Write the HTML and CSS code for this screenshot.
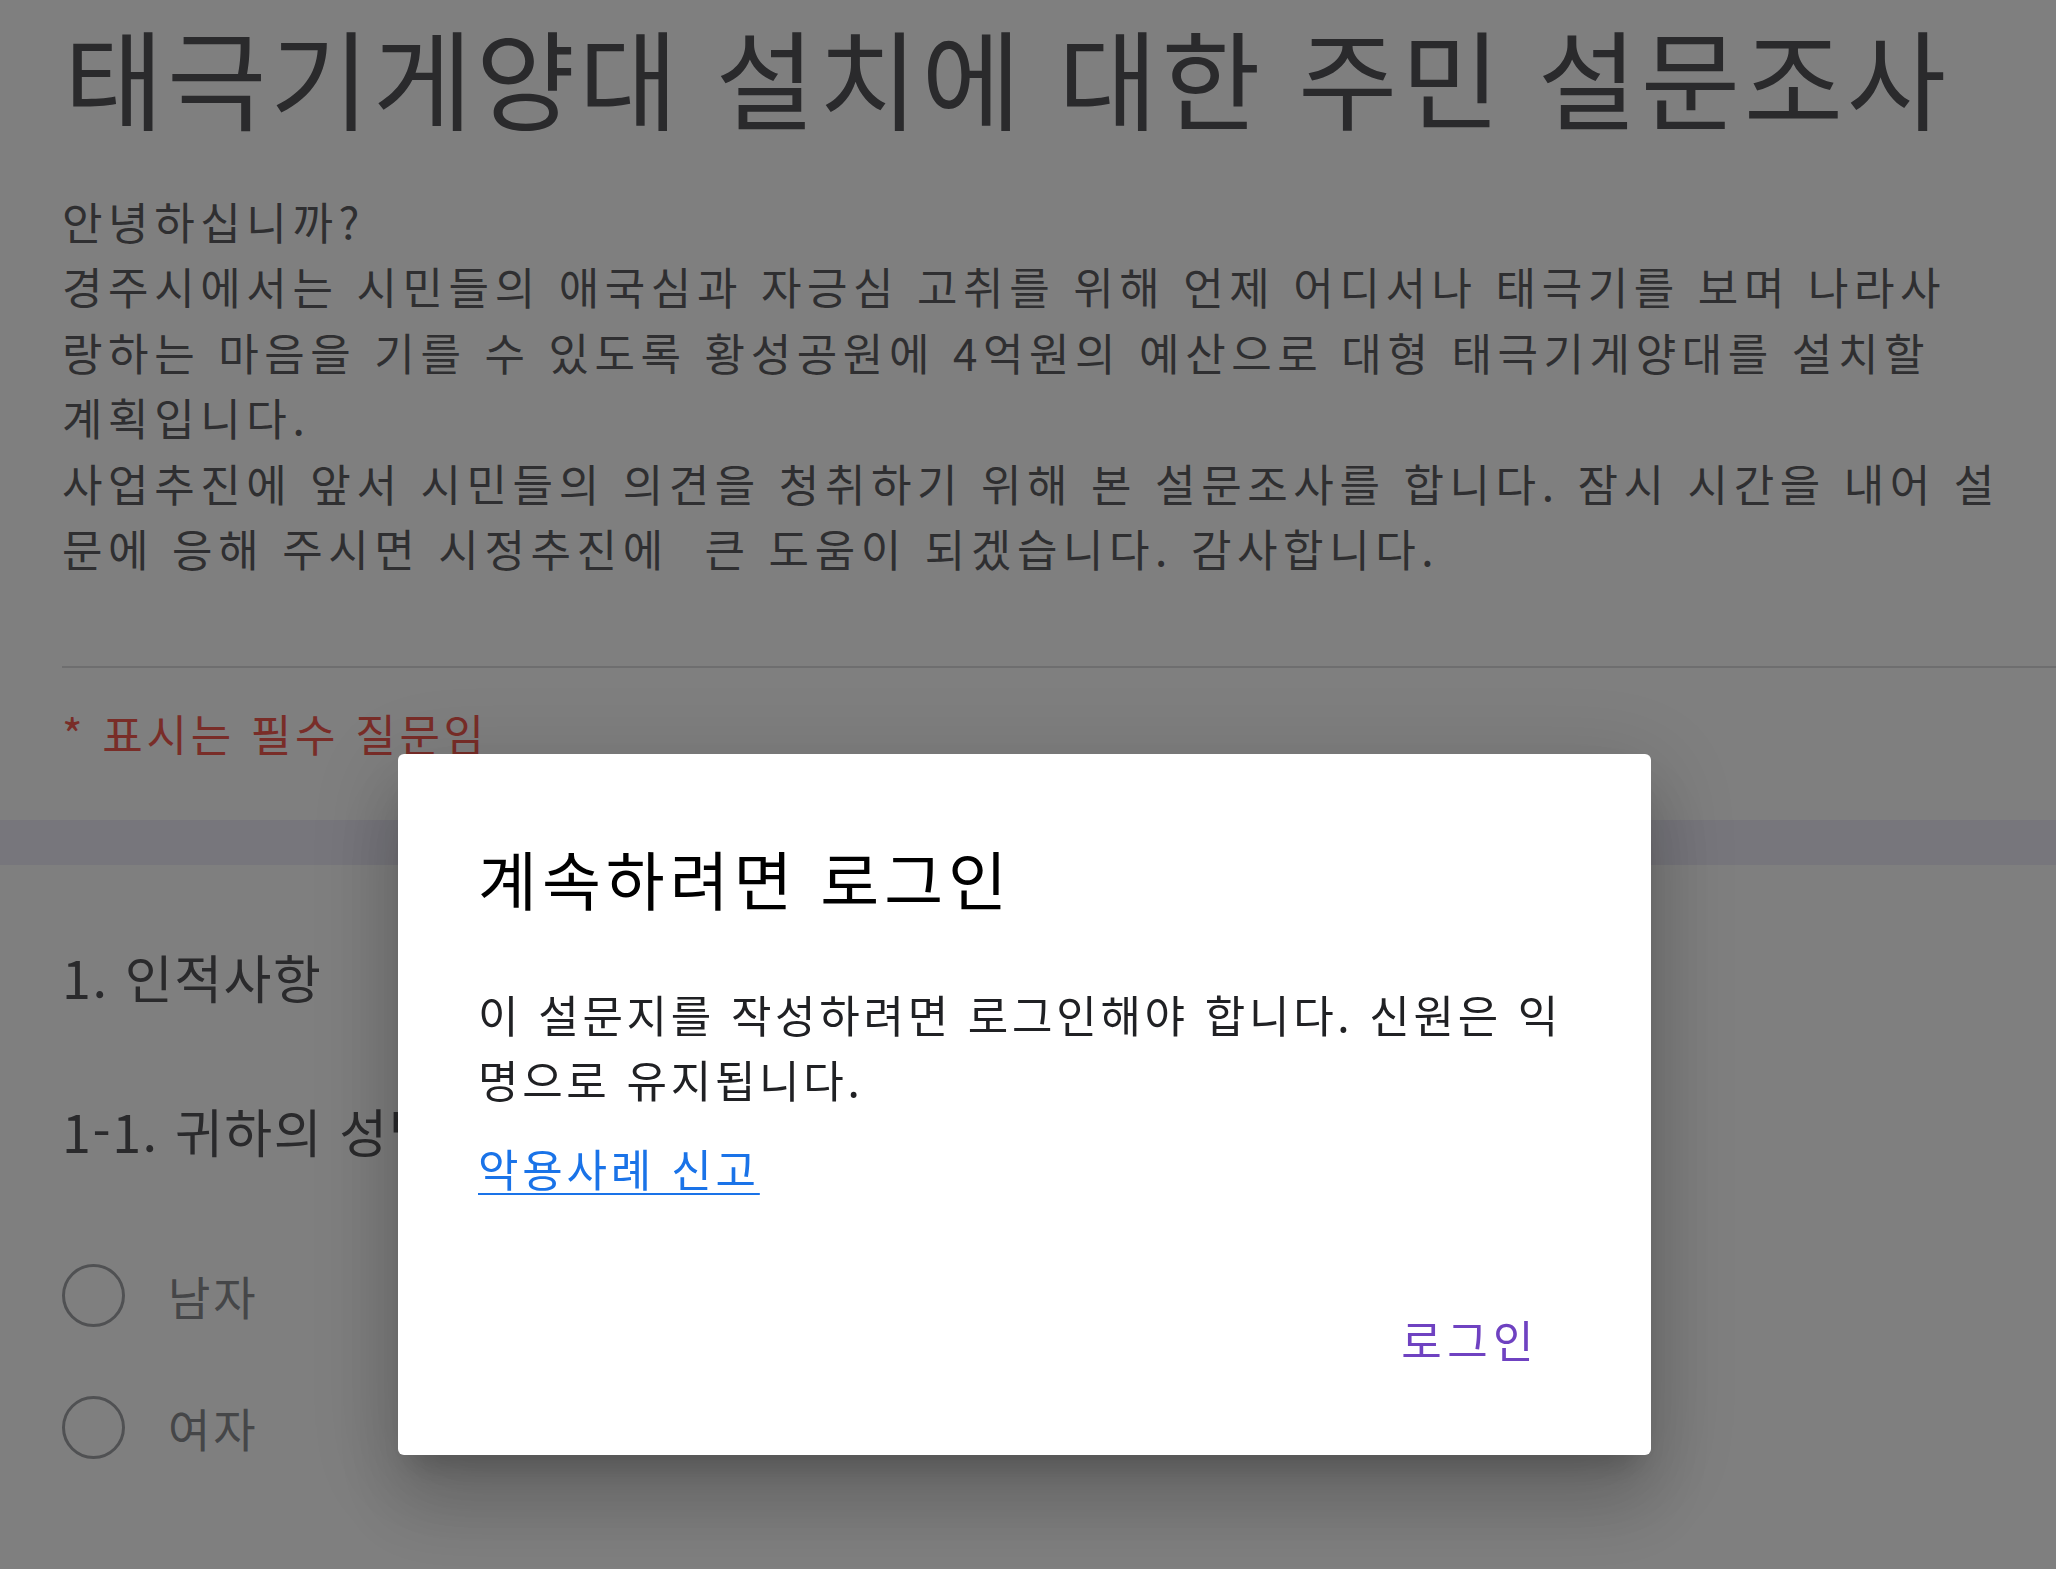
FILE: index.html
```html
<!DOCTYPE html>
<html lang="ko">
<head>
<meta charset="utf-8">
<title>태극기게양대 설치에 대한 주민 설문조사</title>
<link rel="stylesheet" href="styles.css">
</head>
<body>
<main class="form">
  <section class="card card-head">
    <div class="head-main">
      <h1 class="form-title">태극기게양대 설치에 대한 주민 설문조사</h1>
      <div class="form-desc">안녕하십니까?<br>경주시에서는 시민들의 애국심과 자긍심 고취를 위해 언제 어디서나 태극기를 보며 나라사<br>랑하는 마음을 기를 수 있도록 황성공원에 4억원의 예산으로 대형 태극기게양대를 설치할<br>계획입니다.<br>사업추진에 앞서 시민들의 의견을 청취하기 위해 본 설문조사를 합니다. 잠시 시간을 내어 설<br>문에 응해 주시면 시정추진에&nbsp; 큰 도움이 되겠습니다. 감사합니다.</div>
    </div>
    <div class="head-note">* 표시는 필수 질문임</div>
  </section>
  <div class="gap-strip"></div>
  <section class="card card-q">
    <div class="q-section">1. 인적사항</div>
    <div class="q-title">1-1. 귀하의 성별은? <span class="req">*</span></div>
    <div class="options">
      <div class="opt"><span class="radio"></span><span class="opt-label">남자</span></div>
      <div class="opt"><span class="radio"></span><span class="opt-label">여자</span></div>
    </div>
  </section>
</main>

<div class="scrim"></div>

<div class="dialog" role="dialog">
  <h2 class="dlg-title">계속하려면 로그인</h2>
  <p class="dlg-body">이 설문지를 작성하려면 로그인해야 합니다. 신원은 익<br>명으로 유지됩니다.</p>
  <a class="dlg-link" href="#">악용사례 신고</a>
  <div class="dlg-actions">
    <span class="dlg-btn">로그인</span>
  </div>
</div>
</body>
</html>
```

FILE: styles.css
```css
html, body {
  margin: 0;
  padding: 0;
}

body {
  background: #eeecf8;
  font-family: "Noto Sans CJK KR", "Noto Sans", sans-serif;
  width: 2056px;
  height: 1569px;
  overflow: hidden;
}

.form {
  display: flex;
  flex-direction: column;
}

.card {
  background: #ffffff;
  padding-left: 62px;
}

.card-head {
  height: 820px;
  box-sizing: border-box;
}

.head-main {
  padding-top: 10px;
  padding-bottom: 85px;
  border-bottom: 2px solid #dcdcde;
}

.form-title {
  margin: 0 0 49px 2px;
  font-size: 108px;
  line-height: 130px;
  font-weight: 400;
  color: #545458;
  letter-spacing: 3.6px;
  white-space: nowrap;
}

.form-desc {
  font-size: 44px;
  line-height: 65.4px;
  color: #5e5e62;
  letter-spacing: 5.6px;
  white-space: nowrap;
}

.head-note {
  padding-top: 33px;
  font-size: 44px;
  line-height: 65px;
  color: #f25a50;
  letter-spacing: 3.7px;
}

.gap-strip {
  height: 45px;
}

.card-q {
  height: 704px;
  padding-top: 77px;
  box-sizing: border-box;
}

.q-section,
.q-title {
  font-size: 52px;
  line-height: 70px;
  color: #545458;
  letter-spacing: 1.6px;
  white-space: nowrap;
}

.q-title {
  margin-top: 84px;
}

.req {
  color: #f25a50;
}

.options {
  margin-top: 79px;
  display: flex;
  flex-direction: column;
  gap: 32px;
}

.opt {
  height: 100px;
  display: flex;
  align-items: center;
  gap: 43px;
}

.radio {
  width: 57px;
  height: 57px;
  border: 3px solid #a0a2a6;
  border-radius: 50%;
}

.opt-label {
  font-size: 46px;
  line-height: 60px;
  color: #8a8c90;
  letter-spacing: 3px;
}

.scrim {
  position: fixed;
  inset: 0;
  background: rgba(0, 0, 0, 0.5);
}

.dialog {
  position: fixed;
  left: 398px;
  top: 754px;
  width: 1253px;
  height: 701px;
  box-sizing: border-box;
  padding: 83px 94px 0 80px;
  background: #ffffff;
  border-radius: 6px;
  box-shadow: 0 48px 76px 6px rgba(0, 0, 0, 0.14),
              0 18px 92px 16px rgba(0, 0, 0, 0.12),
              0 22px 30px -14px rgba(0, 0, 0, 0.2);
  display: flex;
  flex-direction: column;
  align-items: flex-start;
}

.dlg-title {
  margin: 0;
  font-size: 64px;
  line-height: 80px;
  font-weight: 400;
  color: #000000;
  letter-spacing: 5px;
}

.dlg-body {
  margin: 65px 0 0 0;
  font-size: 44px;
  line-height: 65px;
  color: #202124;
  letter-spacing: 3.7px;
  white-space: nowrap;
}

.dlg-link {
  margin-top: 24px;
  font-size: 44px;
  line-height: 65px;
  color: #1a73e8;
  letter-spacing: 3.8px;
  text-decoration: underline;
  text-decoration-thickness: 2px;
  text-underline-offset: 6px;
}

.dlg-actions {
  align-self: stretch;
  display: flex;
  justify-content: flex-end;
  margin-top: 106px;
  padding-right: 18px;
}

.dlg-btn {
  font-size: 44px;
  line-height: 65px;
  color: #6f42c1;
  letter-spacing: 5.4px;
}
```
